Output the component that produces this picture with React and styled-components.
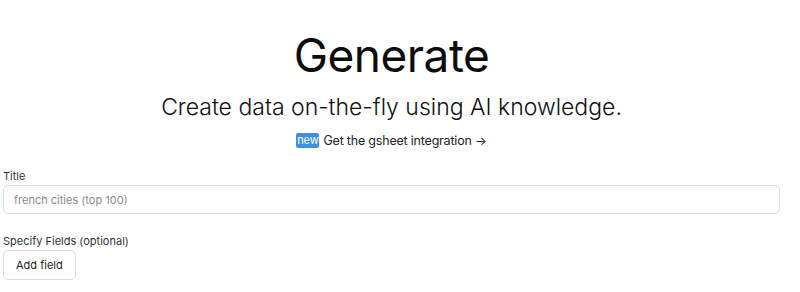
import React from "react";
import styled, { createGlobalStyle } from "styled-components";

const GlobalStyle = createGlobalStyle`
  body {
    margin: 0;
    background: #fff;
    font-family: Inter, "Noto Sans", sans-serif;
    color: #111;
  }
`;

const Page = styled.div`
  width: 777px;
  padding: 0 20px 0 3px;
  box-sizing: content-box;
`;

const Header = styled.header`
  display: flex;
  flex-direction: column;
  align-items: center;
  padding-top: 27px;
`;

const Heading = styled.h1`
  margin: 0;
  font-size: 46px;
  font-weight: 400;
  line-height: 56px;
  letter-spacing: -0.5px;
  color: #0c0c0c;
`;

const Subtitle = styled.p`
  margin: 10px 0 0;
  font-size: 23px;
  font-weight: 300;
  line-height: 28px;
  color: #111;
`;

const PromoLink = styled.a`
  display: flex;
  align-items: center;
  gap: 4px;
  margin-top: 12px;
  font-size: 12.5px;
  letter-spacing: -0.2px;
  color: #222;
  text-decoration: none;
`;

const Badge = styled.span`
  background: #3f8ee8;
  color: #fff;
  font-size: 11px;
  line-height: 15px;
  padding: 0 1px;
  border-radius: 2px;
`;

const Form = styled.form`
  display: flex;
  flex-direction: column;
  margin-top: 21px;
`;

const Field = styled.div`
  display: flex;
  flex-direction: column;
  gap: 2px;
  margin-bottom: ${(p) => p.$spacing || 0}px;
`;

const Label = styled.label`
  font-size: 11px;
  line-height: 14px;
  color: #333;
`;

const TextInput = styled.input`
  height: 29px;
  box-sizing: border-box;
  border: 1px solid #dcdcdc;
  border-radius: 5px;
  padding: 0 10px;
  font-family: inherit;
  font-size: 11px;
  color: #222;
  outline: none;
  &::placeholder {
    color: #8a8a8a;
  }
`;

const Button = styled.button`
  align-self: flex-start;
  height: 30px;
  padding: 0 12px;
  border: 1px solid #dcdcdc;
  border-radius: 5px;
  background: #fff;
  font-family: inherit;
  font-size: 11px;
  color: #222;
`;

export default function App() {
  return (
    <>
      <GlobalStyle />
      <Page>
        <Header>
          <Heading>Generate</Heading>
          <Subtitle>Create data on-the-fly using AI knowledge.</Subtitle>
          <PromoLink href="#">
            <Badge>new</Badge>
            Get the gsheet integration →
          </PromoLink>
        </Header>
        <Form onSubmit={(e) => e.preventDefault()}>
          <Field $spacing={20}>
            <Label>Title</Label>
            <TextInput placeholder="french cities (top 100)" />
          </Field>
          <Field>
            <Label>Specify Fields (optional)</Label>
            <Button type="button">Add field</Button>
          </Field>
        </Form>
      </Page>
    </>
  );
}
